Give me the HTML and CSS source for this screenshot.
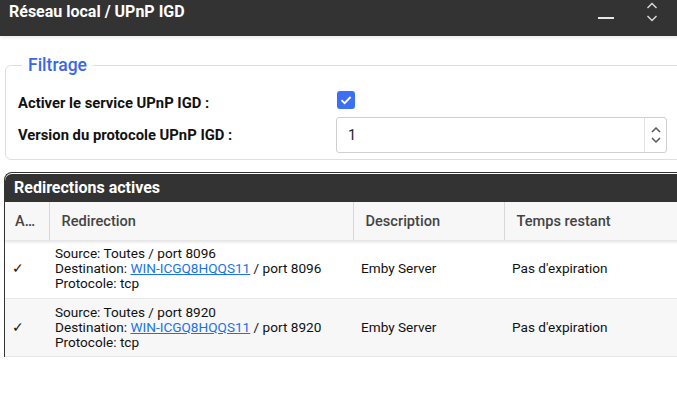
FILE: index.html
```html
<!DOCTYPE html>
<html lang="fr">
<head>
  <meta charset="UTF-8" />
  <title>Réseau local / UPnP IGD</title>
  <link rel="stylesheet" href="styles.css">
</head>
<body>
  <div class="window">
    <div class="titlebar">
      <span class="title">Réseau local / UPnP IGD</span>
      <div class="controls">
        <span class="minimize"></span>
        <svg class="updown" width="12" height="22" viewBox="0 0 12 22">
          <path d="M1.5 7 L6 2.5 L10.5 7" fill="none" stroke="#ddd" stroke-width="1.4"/>
          <path d="M1.5 15 L6 19.5 L10.5 15" fill="none" stroke="#ddd" stroke-width="1.4"/>
        </svg>
      </div>
    </div>

    <div class="content">
      <fieldset class="group">
        <legend>Filtrage</legend>
        <div class="field first">
          <label>Activer le service UPnP IGD :</label>
          <span class="checkbox">
            <svg width="18" height="18" viewBox="0 0 18 18">
              <path d="M4.5 9.2 L7.6 12.2 L13.6 6" fill="none" stroke="#fff" stroke-width="1.8"/>
            </svg>
          </span>
        </div>
        <div class="field">
          <label>Version du protocole UPnP IGD :</label>
          <div class="spin">
            <span class="spin-value">1</span>
            <span class="spin-arrows">
              <svg width="12" height="22" viewBox="0 0 12 22">
                <path d="M2 8 L6 4 L10 8" fill="none" stroke="#555" stroke-width="1.5"/>
                <path d="M2 14 L6 18 L10 14" fill="none" stroke="#555" stroke-width="1.5"/>
              </svg>
            </span>
          </div>
        </div>
      </fieldset>

      <div class="panel">
        <div class="panel-title">Redirections actives</div>
        <table class="grid">
          <colgroup>
            <col class="c-act"><col class="c-redir"><col class="c-desc"><col class="c-time">
          </colgroup>
          <thead>
            <tr>
              <th>A…</th>
              <th>Redirection</th>
              <th>Description</th>
              <th>Temps restant</th>
            </tr>
          </thead>
          <tbody>
            <tr>
              <td class="check">✓</td>
              <td>Source: Toutes / port 8096<br>Destination: <a href="#">WIN-ICGQ8HQQS11</a> / port 8096<br>Protocole: tcp</td>
              <td>Emby Server</td>
              <td>Pas d'expiration</td>
            </tr>
            <tr class="alt">
              <td class="check">✓</td>
              <td>Source: Toutes / port 8920<br>Destination: <a href="#">WIN-ICGQ8HQQS11</a> / port 8920<br>Protocole: tcp</td>
              <td>Emby Server</td>
              <td>Pas d'expiration</td>
            </tr>
          </tbody>
        </table>
      </div>
    </div>
  </div>
</body>
</html>
```

FILE: styles.css
```css
* { margin: 0; padding: 0; box-sizing: border-box; }
body {
  background: #fff;
  font-family: Roboto, "Liberation Sans", sans-serif;
  color: #111;
  overflow: hidden;
}
.window {
  width: 700px;
}

/* Title bar */
.titlebar {
  height: 36px;
  background: #333;
  display: flex;
  justify-content: space-between;
  align-items: flex-start;
  padding: 2px 10px 0 9px;
  box-shadow: 0 2px 3px rgba(0,0,0,0.08);
  position: relative;
}
.title {
  color: #fff;
  font-weight: 700;
  font-size: 16px;
  line-height: 20px;
}
.controls {
  display: flex;
  align-items: flex-start;
  gap: 32px;
  width: 60px;
  margin-right: 32px;
}
.minimize {
  display: block;
  width: 16px;
  height: 1.5px;
  background: #e6e6e6;
  margin-top: 15px;
}
.updown { display: block; margin-top: -1px; }

/* Filter group */
.content {
  padding: 0 0 0 5px;
}
.group {
  margin-top: 21px;
  border: 1px solid #dedede;
  border-radius: 6px;
  padding: 15px 12px 6px 12px;
  width: 695px;
}
.group legend {
  margin-left: 4px;
  padding: 0 6px;
  color: #3b66e6;
  font-size: 17.5px;
  font-weight: 500;
  line-height: 16px;
}
.field {
  display: flex;
  align-items: center;
  height: 36px;
}
.field.first {
  height: 29px;
}
.field label {
  width: 319px;
  font-weight: 700;
  font-size: 14.8px;
}
.checkbox {
  width: 18px;
  height: 18px;
  border-radius: 3px;
  background: #3c6ff5;
  display: flex;
  margin-top: -5px;
}
.spin {
  width: 331px;
  height: 36px;
  border: 1px solid #cfcfcf;
  border-radius: 3px;
  display: flex;
  align-items: center;
  justify-content: space-between;
  margin-left: -1px;
}
.spin-value {
  padding-left: 11px;
  font-size: 14.5px;
  color: #222;
}
.spin-arrows {
  height: 100%;
  width: 22px;
  border-left: 1px solid #e3e3e3;
  display: flex;
  align-items: center;
  justify-content: center;
}

/* Redirections panel */
.panel {
  margin-top: 12px;
  margin-left: -1px;
  border-top: 1px solid #333;
  border-left: 1px solid #333;
  border-top-left-radius: 8px;
  padding: 1px 0 0 0;
  width: 700px;
}
.panel-title {
  background: #333;
  color: #fff;
  font-weight: 700;
  font-size: 16px;
  height: 28px;
  line-height: 28px;
  padding-left: 9px;
  border-top-left-radius: 7px;
}
.grid {
  border-collapse: collapse;
  table-layout: fixed;
  width: 700px;
  font-size: 13.6px;
}
.c-act { width: 44px; }
.c-redir { width: 304px; }
.c-desc { width: 151px; }
.c-time { width: 201px; }
.grid thead tr {
  background: #f7f7f7;
  box-shadow: 0 2px 3px rgba(0,0,0,0.12);
}
.grid th {
  text-align: left;
  font-weight: 500;
  font-size: 14.6px;
  color: #444;
  height: 38px;
  padding: 0 12px;
  border-left: 1px solid #d8d8d8;
}
.grid th:first-child { border-left: none; padding-left: 10px; }
.grid td {
  height: 58px;
  padding: 0 8px;
  line-height: 15px;
  border-bottom: 1px solid #e8e8e8;
  color: #111;
}
.grid td:nth-child(2) { padding-left: 6px; }
.grid tr.alt td { background: #f7f7f7; }
.grid td.check { padding-left: 7px; font-size: 14px; font-weight: 300; }
.grid a {
  color: #1a73e8;
  text-decoration: underline;
}
```
